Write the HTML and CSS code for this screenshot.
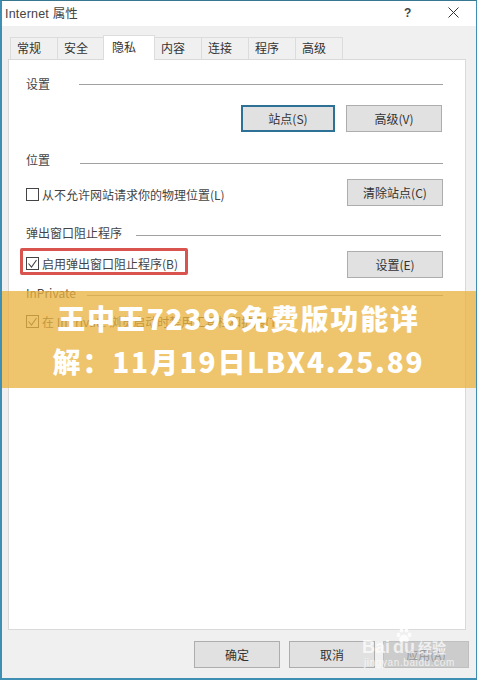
FILE: index.html
```html
<!DOCTYPE html>
<html lang="zh-CN">
<head>
<meta charset="utf-8">
<title>Internet 属性</title>
<link rel="stylesheet" href="styles.css">
</head>
<body>
<div class="window">
  <header class="titlebar">
    <span class="title">Internet 属性</span>
    <span class="help">?</span>
    <svg class="close" width="11" height="11" viewBox="0 0 11 11"><path d="M.5.5l10 10M10.500.5l-10 10" stroke="#333" fill="none"/></svg>
  </header>
  <div class="client">
    <nav class="tabs">
      <span class="tab">常规</span>
      <span class="tab">安全</span>
      <span class="tab active">隐私</span>
      <span class="tab">内容</span>
      <span class="tab">连接</span>
      <span class="tab">程序</span>
      <span class="tab">高级</span>
    </nav>
    <main class="panel">
      <section class="group g-settings">
        <div class="heading"><span>设置</span><i></i></div>
        <div class="row right">
          <button class="btn default">站点(S)</button>
          <button class="btn">高级(V)</button>
        </div>
      </section>
      <section class="group g-location">
        <div class="heading"><span>位置</span><i></i></div>
        <div class="row between">
          <label class="check"><b class="box"></b>从不允许网站请求你的物理位置(L)</label>
          <button class="btn">清除站点(C)</button>
        </div>
      </section>
      <section class="group g-popup">
        <div class="heading"><span>弹出窗口阻止程序</span><i></i></div>
        <div class="row between">
          <label class="check highlighted"><b class="box"><svg width="13" height="13" viewBox="0 0 13 13"><path d="M2.500 6.500l3 3.500 5-7" fill="none" stroke="#444" stroke-width="1.100"/></svg></b>启用弹出窗口阻止程序(B)</label>
          <button class="btn">设置(E)</button>
        </div>
      </section>
      <section class="group g-private">
        <div class="heading"><span>InPrivate</span><i></i></div>
        <label class="check"><b class="box"><svg width="13" height="13" viewBox="0 0 13 13"><path d="M2.500 6.500l3 3.500 5-7" fill="none" stroke="#444" stroke-width="1.100"/></svg></b>在 InPrivate 浏览启动时禁用工具栏和扩展(T)</label>
      </section>
    </main>
    <footer class="actions">
      <button class="btn wide">确定</button>
      <button class="btn wide">取消</button>
      <button class="btn wide disabled">应用(A)</button>
    </footer>
  </div>
  <div class="banner">王中王72396免费版功能详<br>解：11月19日LBX4.25.89</div>
  <div class="watermark">
    <svg class="paw" width="24" height="16" viewBox="0 0 32 26" fill="#fff"><ellipse cx="7" cy="13" rx="3" ry="4"/><ellipse cx="12" cy="5" rx="3" ry="4"/><ellipse cx="20" cy="5" rx="3" ry="4"/><ellipse cx="25" cy="13" rx="3" ry="4"/><path d="M16 12c-4 0-8 5-8 9 0 4 5 3 8 2 3 1 8 2 8-2 0-4-4-9-8-9z"/></svg>
    <div class="wm-brand">Bai<span class="wm-gap"></span>du<span class="wm-cn">经验</span></div>
    <div class="wm-url">jingyan.baidu.com</div>
  </div>
</div>
</body>
</html>
```
FILE: styles.css
```css
* { box-sizing: border-box; }
html, body { margin: 0; padding: 0; background: #fff; }
body { font-family: "Noto Sans CJK SC", "Liberation Sans", sans-serif; font-size: 12px; color: #3c3c3c; }
.window {
  position: relative; width: 477px; height: 680px; overflow: hidden;
  display: flex; flex-direction: column;
  border: 1px solid #3f8fb5; border-left-width: 2px; border-bottom-width: 2px;
  border-top-color: #37778f;
}
.titlebar { height: 25px; flex: none; display: flex; align-items: center; background: #fff; padding: 0 0 2px 3px; color: #444; }
.title { flex: 1; font-family: "Liberation Sans", "Noto Sans CJK SC", sans-serif; font-size: 12.500px; letter-spacing: .2px; }
.help { width: 12px; margin-right: 32px; font-weight: 700; font-size: 12px; font-family: "Liberation Sans", sans-serif; }
.close { margin-right: 17px; }
.client { flex: 1; min-height: 0; display: flex; flex-direction: column; background: #f0f0f0; padding: 9px 10px 0 6px; }
.tabs { display: flex; height: 24px; flex: none; align-items: flex-end; padding-left: 2px; position: relative; z-index: 1; }
.tab {
  height: 22px; width: 48px; margin-right: -1px; display: flex; align-items: center; padding: 0 0 2px 6px;
  background: #f0f0f0; border: 1px solid #dcdcdc; border-bottom: 0; font-size: 12px; color: #333;
}
.tab.active { height: 25px; width: 52px; margin: 0 -1px -1px -1px; background: #fff; padding: 0 0 4px 8px; position: relative; z-index: 1; }
.panel { height: 571px; flex: none; background: #fff; border: 1px solid #d9d9d9; padding: 0 22px 0 17px; }
.group { display: block; }
.heading { display: flex; align-items: center; height: 18px; color: #444; }
.heading span { margin-bottom: 2px; }
.heading i { flex: 1; height: 1px; background: #a0a0a0; }
.g-settings { padding-top: 15px; }
.g-settings .heading i { margin-left: 29px; }
.row { display: flex; align-items: center; }
.right { justify-content: flex-end; gap: 11px; margin: 12px 1px 0 0; }
.between { justify-content: space-between; }
.g-location { padding-top: 19px; }
.g-location .heading i { margin: 6px 0 0 30px; }
.g-location .row { margin-top: 10px; }
.g-location .check { margin-top: 3px; }
.g-popup { padding-top: 18px; }
.g-popup .heading i { margin: 4px 2px 0 14px; }
.g-popup .row { margin-top: 9px; }
.g-private { padding-top: 6px; }
.g-private .heading i { margin: 4px 0 0 11px; }
.g-private .check { margin-top: 11px; }
.btn {
  width: 96px; height: 27px; padding: 0; font: inherit; font-size: 12px; color: #333;
  background: #e1e1e1; border: 1px solid #adadad; border-radius: 0;
}
.btn.default { width: 94px; border: 2px solid #2d7196; }
.btn.wide { width: 86px; }
.btn.wide:first-child { margin-right: 1px; }
.btn.disabled { color: #999; background: #ccc; border-color: #bfbfbf; }
.check { position: relative; display: flex; align-items: center; gap: 3px; font-size: 12px; color: #444; white-space: nowrap; }
.box { width: 13px; height: 13px; flex: none; background: #fff; border: 1px solid #444; display: block; position: relative; }
.box svg { display: block; margin: -1px; }
.highlighted { margin-top: -3px; }
.highlighted::after {
  content: ""; position: absolute; left: -6px; right: -10px; top: -7px; bottom: -3px;
  border: 3px solid #d9534f; border-radius: 2px;
}
.actions { flex: 1; display: flex; justify-content: flex-end; gap: 8px; align-items: flex-start; padding-top: 11px; margin-right: -3px; }
.banner {
  position: absolute; left: -2px; right: -1px; top: 290px; height: 97px; padding: 6px 0 0;
  background: rgba(232, 178, 62, .76); color: #fff; text-align: center; white-space: nowrap;
  font-size: 28px; line-height: 43px; font-weight: 900; letter-spacing: 1.800px;
  font-family: "Noto Sans CJK SC", sans-serif;
}
.watermark { position: absolute; left: 358px; top: 626px; width: 100px; height: 44px; color: rgba(255,255,255,.72); }
.paw { position: absolute; left: 32px; top: 0; opacity: .85; }
.wm-brand { position: absolute; left: 2px; top: 9px; font: 700 18px/22px "Liberation Sans", sans-serif; white-space: nowrap; }
.wm-gap { display: inline-block; width: 3px; }
.wm-cn { font: 700 14px/22px "Noto Sans CJK SC", sans-serif; margin-left: 3px; }
.wm-url { position: absolute; left: 4px; top: 30px; font: 10px/12px "Liberation Sans", sans-serif; letter-spacing: .6px; white-space: nowrap; }
```
